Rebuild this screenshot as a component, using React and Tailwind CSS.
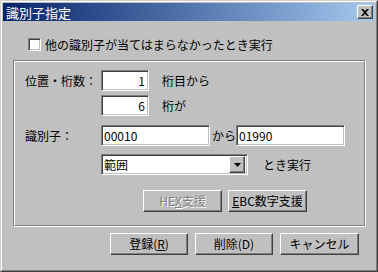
import React from 'react';

const font = { fontFamily: '"Noto Sans CJK JP", "Liberation Sans", sans-serif' };

// sunken edit box
function Field({ className, children, right }) {
  return (
    <div
      className={`flex-none h-[21px] bg-white border border-t-[#808080] border-l-[#808080] border-b-white border-r-white shadow-[inset_1px_1px_0_#404040,inset_-1px_-1px_0_#c0c0c0] flex items-center px-[3px] text-[12px] text-black ${right ? 'justify-end' : ''} ${className}`}
    >
      {children}
    </div>
  );
}

// raised push button
function Btn({ className = '', children, disabled }) {
  return (
    <div
      className={`h-[22px] border border-t-white border-l-white border-b-[#404040] border-r-[#404040] shadow-[inset_-1px_-1px_0_#808080] flex items-center justify-center text-[12px] ${disabled ? 'text-[#808080] [text-shadow:1px_1px_0_#ffffff]' : 'text-black'} ${className}`}
    >
      {children}
    </div>
  );
}

export default function App() {
  return (
    <div style={font} className="w-[378px] h-[272px] bg-[#c0c0c0] border border-t-[#d4d0c8] border-l-[#d4d0c8] border-b-[#404040] border-r-[#404040] select-none">
      <div className="w-full h-full border border-t-white border-l-white border-b-[#808080] border-r-[#808080] px-[1px] pt-[1px] flex flex-col">
        {/* Title bar */}
        <div className="h-[18px] bg-gradient-to-r from-[#0a246a] to-[#a6caf0] flex items-center justify-between pl-[3px] pr-[2px]">
          <span className="text-white text-[13px] leading-none">識別子指定</span>
          <div className="w-[16px] h-[14px] bg-[#c0c0c0] border border-t-white border-l-white border-b-[#404040] border-r-[#404040] shadow-[inset_-1px_-1px_0_#808080] flex items-center justify-center">
            <svg width="8" height="7" viewBox="0 0 8 7">
              <path d="M0 0h2l2 2 2-2h2L5 3.5 8 7H6L4 5 2 7H0l3-3.5z" fill="#000" />
            </svg>
          </div>
        </div>

        {/* Checkbox */}
        <div className="flex items-center gap-[4px] mt-[17px] ml-[25px]">
          <div className="w-[13px] h-[13px] bg-white border border-t-[#808080] border-l-[#808080] border-b-white border-r-white shadow-[inset_1px_1px_0_#404040,inset_-1px_-1px_0_#c0c0c0]" />
          <span className="text-[12px] text-black leading-none">他の識別子が当てはまらなかったとき実行</span>
        </div>

        {/* Group box */}
        <div className="ml-[10px] mr-[9px] mt-[9px] h-[167px] border border-t-[#808080] border-l-[#808080] border-b-white border-r-white">
          <div className="w-full h-full border border-t-white border-l-white border-b-[#808080] border-r-[#808080] pl-[10px] pt-[8px] flex flex-col">
            <div className="flex items-center">
              <span className="w-[76px] text-[12px]">位置・桁数：</span>
              <Field right className="w-[48px]">1</Field>
              <span className="ml-[13px] text-[12px]">桁目から</span>
            </div>
            <div className="flex items-center mt-[4px] pl-[76px]">
              <Field right className="w-[48px]">6</Field>
              <span className="ml-[13px] text-[12px]">桁が</span>
            </div>
            <div className="flex items-center mt-[9px]">
              <span className="w-[76px] flex-none text-[12px]">識別子：</span>
              <Field className="w-[109px] !pl-[2px]">00010</Field>
              <span className="ml-[2px] w-[24px] flex-none whitespace-nowrap text-[12px]">から</span>
              <Field className="w-[109px] !pl-[2px]">01990</Field>
            </div>
            <div className="flex items-center mt-[8px] pl-[76px]">
              <Field className="w-[147px] !pl-[2px] !pr-[2px] justify-between">
                <span>範囲</span>
                <div className="w-[16px] h-[17px] bg-[#c0c0c0] border border-t-white border-l-white border-b-[#404040] border-r-[#404040] shadow-[inset_-1px_-1px_0_#808080] flex items-center justify-center">
                  <svg width="7" height="4" viewBox="0 0 7 4"><path d="M0 0h7L3.5 4z" fill="#000" /></svg>
                </div>
              </Field>
              <span className="ml-[15px] text-[12px]">とき実行</span>
            </div>
            <div className="flex mt-[15px] pl-[118px] gap-[6px]">
              <Btn disabled className="w-[79px]">
                <span>HE<u>X</u>支援</span>
              </Btn>
              <Btn className="w-[79px]">
                <span><u>E</u>BC数字支援</span>
              </Btn>
            </div>
          </div>
        </div>

        {/* Bottom buttons */}
        <div className="flex gap-[7px] ml-[107px] mt-[6px]">
          <Btn className="w-[78px]"><span>登録(<u>R</u>)</span></Btn>
          <Btn className="w-[78px]"><span>削除(D)</span></Btn>
          <Btn className="w-[79px]"><span>キャンセル</span></Btn>
        </div>
      </div>
    </div>
  );
}
